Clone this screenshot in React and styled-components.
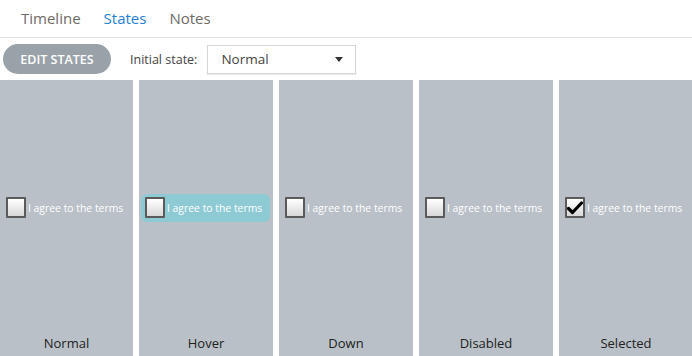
import React from 'react';
import styled, { createGlobalStyle } from 'styled-components';

const Global = createGlobalStyle`
    html, body {
        margin: 0;
        padding: 0;
        background: #fff;
        font-family: "Open Sans", "Noto Sans", sans-serif;
    }
`;

const Page = styled.div`
    width: 692px;
    height: 356px;
    display: flex;
    flex-direction: column;
    overflow: hidden;
`;

const Tabs = styled.div`
    height: 38px;
    display: flex;
    align-items: center;
    gap: 23px;
    padding-left: 21px;
    padding-bottom: 1px;
    box-sizing: border-box;
    border-bottom: 1px solid #dde1e5;
`;

const Tab = styled.div`
    font-size: 15px;
    color: ${p => (p.active ? '#1f7fd2' : '#6e6a66')};
    cursor: pointer;
`;

const Toolbar = styled.div`
    height: 42px;
    display: flex;
    align-items: center;
    padding-left: 3px;
`;

const EditButton = styled.button`
    width: 108px;
    height: 30px;
    border: none;
    border-radius: 15px;
    background: #9aa2a9;
    color: #fff;
    font-family: inherit;
    font-size: 12.5px;
    font-weight: 600;
    margin-right: 19px;
`;

const Label = styled.span`
    font-size: 12.5px;
    color: #444;
    margin-right: 10px;
`;

const Select = styled.div`
    width: 149px;
    height: 29px;
    box-sizing: border-box;
    border: 1px solid #d4d8dc;
    box-shadow: 0 1px 1px rgba(0, 0, 0, 0.08);
    display: flex;
    align-items: center;
    justify-content: space-between;
    padding: 0 12px 0 13px;
    font-size: 13.5px;
    color: #444;
`;

const Caret = styled.span`
    width: 0;
    height: 0;
    border-left: 4px solid transparent;
    border-right: 4px solid transparent;
    border-top: 5px solid #333;
`;

const Panels = styled.div`
    flex: 1;
    display: flex;
    gap: 6px;
`;

const Panel = styled.div`
    width: 134px;
    flex-shrink: 0;
    background: #b9c0c7;
    display: flex;
    flex-direction: column;
    align-items: center;
    &:first-child {
        width: 133px;
    }
`;

const Center = styled.div`
    flex: 1;
    display: flex;
    align-items: center;
    align-self: stretch;
    padding-left: 2px;
    padding-top: 1px;
`;

const Check = styled.div`
    display: flex;
    align-items: center;
    height: 28px;
    padding: 0 8px 0 4px;
    border-radius: 6px;
    background: ${p => (p.hover ? '#8ecad4' : 'transparent')};
`;

const Box = styled.div`
    width: 16px;
    height: 17px;
    border: 2px solid #5a5a5a;
    border-radius: 1px;
    background: linear-gradient(to bottom, #ffffff, #d8d8d8);
    display: flex;
    align-items: center;
    justify-content: center;
    margin-right: 2px;
`;

const CheckText = styled.span`
    color: #fff;
    font-size: 10.4px;
    white-space: nowrap;
`;

const StateName = styled.div`
    font-size: 13px;
    color: #222;
    padding-bottom: 4px;
`;

const states = [
    { name: 'Normal' },
    { name: 'Hover', hover: true },
    { name: 'Down' },
    { name: 'Disabled' },
    { name: 'Selected', checked: true },
];

function CheckMark() {
    return (
        <svg width="16" height="14" viewBox="0 0 16 14">
            <path d="M1.5 7.5 L5.5 11.5 L14.5 2" fill="none" stroke="#000" strokeWidth="3.2" strokeLinecap="round" strokeLinejoin="round" />
        </svg>
    );
}

export default function App() {
    return (
        <>
            <Global />
            <Page>
                <Tabs>
                    <Tab>Timeline</Tab>
                    <Tab active>States</Tab>
                    <Tab>Notes</Tab>
                </Tabs>
                <Toolbar>
                    <EditButton>EDIT STATES</EditButton>
                    <Label>Initial state:</Label>
                    <Select>
                        Normal
                        <Caret />
                    </Select>
                </Toolbar>
                <Panels>
                    {states.map(s => (
                        <Panel key={s.name}>
                            <Center>
                                <Check hover={s.hover}>
                                    <Box>{s.checked && <CheckMark />}</Box>
                                    <CheckText>I agree to the terms</CheckText>
                                </Check>
                            </Center>
                            <StateName>{s.name}</StateName>
                        </Panel>
                    ))}
                </Panels>
            </Page>
        </>
    );
}
